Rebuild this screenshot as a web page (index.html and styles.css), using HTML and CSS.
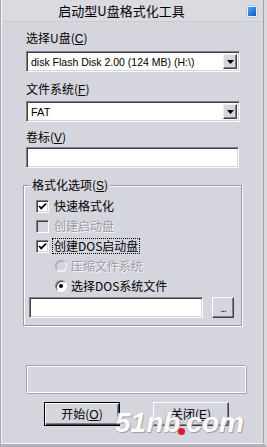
FILE: index.html
```html
<!DOCTYPE html>
<html lang="zh-CN">
<head>
<meta charset="utf-8">
<title>启动型U盘格式化工具</title>
<link rel="stylesheet" href="styles.css">
</head>
<body>
<div class="win">
  <div class="panel">
    <div class="titlebar">
      <span class="title-text">启动型U盘格式化工具</span>
      <span class="title-icon"></span>
    </div>
    <div class="content">
      <div class="label lbl-drive">选择U盘(<u>C</u>)</div>
      <div class="field combo combo-drive">
        <span class="combo-text">disk Flash Disk 2.00 (124 MB) (H:\)</span>
        <span class="drop"><svg width="7" height="4" viewBox="0 0 7 4"><path d="M0 0h7L3.5 4z" fill="#000"/></svg></span>
      </div>
      <div class="label lbl-fs">文件系统(<u>F</u>)</div>
      <div class="field combo combo-fs">
        <span class="combo-text">FAT</span>
        <span class="drop"><svg width="7" height="4" viewBox="0 0 7 4"><path d="M0 0h7L3.5 4z" fill="#000"/></svg></span>
      </div>
      <div class="label lbl-vol">卷标(<u>V</u>)</div>
      <div class="field tb-vol"></div>
      <fieldset class="group">
        <legend>格式化选项(<u>S</u>)</legend>
        <div class="row">
          <span class="chk"><svg width="9" height="9" viewBox="0 0 9 9"><path d="M1 4l2.3 2.4L8 1.5" fill="none" stroke="#000" stroke-width="1.8"/></svg></span>
          <span class="opt">快速格式化</span>
        </div>
        <div class="row disabled">
          <span class="chk off"></span>
          <span class="opt">创建启动盘</span>
        </div>
        <div class="row">
          <span class="chk"><svg width="9" height="9" viewBox="0 0 9 9"><path d="M1 4l2.3 2.4L8 1.5" fill="none" stroke="#000" stroke-width="1.8"/></svg></span>
          <span class="opt focus">创建DOS启动盘</span>
        </div>
        <div class="row sub disabled">
          <span class="radio off"></span>
          <span class="opt">压缩文件系统</span>
        </div>
        <div class="row sub">
          <span class="radio on"><span class="radio-dot"></span></span>
          <span class="opt">选择DOS系统文件</span>
        </div>
        <div class="file-row">
          <div class="field tb-file"></div>
          <div class="btn btn-browse">...</div>
        </div>
      </fieldset>
      <div class="progress"></div>
      <div class="buttons">
        <div class="btn btn-main btn-default"><span>开始(<u>O</u>)</span></div>
        <div class="btn btn-main"><span>关闭(<u>E</u>)</span></div>
      </div>
    </div>
  </div>
  <div class="watermark">51nb<span class="wm-dot"></span>com</div>
</div>
</body>
</html>
```
FILE: styles.css
```css
html, body {
  margin: 0;
  padding: 0;
}
body {
  width: 267px;
  height: 447px;
  overflow: hidden;
  background: #d5d5dd;
  font-family: "Liberation Sans", "Noto Sans CJK SC", sans-serif;
  font-size: 12px;
  color: #000;
}
.win {
  position: relative;
  width: 267px;
  height: 447px;
  box-sizing: border-box;
  border-left: 1px solid #a8a8b0;
  border-right: 3px solid #d8d8de;
  border-bottom: 3px solid #b0b0b8;
  background: #d5d5dd;
}
.panel {
  height: 100%;
  box-sizing: border-box;
  border-left: 1px solid #f4f4f8;
  border-right: 1px solid #a0a0a8;
  border-bottom: 1px solid #f4f4f8;
}
.titlebar {
  height: 21px;
  display: flex;
  align-items: center;
  border-bottom: 1px solid #cbcbd2;
  background: #dadae0;
}
.title-text {
  flex: 1;
  text-align: center;
  font-size: 13px;
  line-height: 15px;
  font-family: "Noto Sans CJK SC", sans-serif;
}
.title-icon {
  width: 8px;
  height: 9px;
  margin: 2px 6px 0 6px;
  border: 1px solid #eef2f8;
  border-radius: 1px;
  background: linear-gradient(135deg, #5aa8f0 0%, #2a7ad8 55%, #1a5cb8 100%);
  box-shadow: 0 0 0 1px #b8c4d4;
}
.content {
  padding-left: 24px;
}
.label {
  height: 14px;
  line-height: 14px;
  font-family: "Noto Sans CJK SC", sans-serif;
  font-size: 12px;
}
.label u, legend u, .btn u {
  font-family: "Liberation Sans", sans-serif;
}
.field {
  box-sizing: border-box;
  background: #fff;
  border: 1px solid;
  border-color: #80808a #fcfcfe #fcfcfe #80808a;
  box-shadow: inset 1px 1px 0 #404048, inset -1px -1px 0 #d5d5dd;
}
.lbl-drive { margin-top: 9px; }
.combo {
  width: 214px;
  height: 21px;
  display: flex;
  align-items: center;
  padding: 2px;
}
.combo-drive { margin-top: 6px; }
.combo-text {
  flex: 1;
  padding-left: 2px;
  font-size: 10.5px;
  font-family: "Liberation Sans", sans-serif;
  white-space: nowrap;
  overflow: hidden;
}
.combo-fs .combo-text {
  font-size: 11px;
}
.drop {
  width: 14px;
  height: 15px;
  box-sizing: border-box;
  background: #d5d5dd;
  border: 1px solid;
  border-color: #f0f0f4 #404048 #404048 #f0f0f4;
  box-shadow: inset -1px -1px 0 #80808a;
  display: flex;
  align-items: center;
  justify-content: center;
}
.lbl-fs { margin-top: 10px; }
.combo-fs { margin-top: 5px; }
.lbl-vol { margin-top: 8px; }
.tb-vol {
  margin-top: 3px;
  width: 213px;
  height: 21px;
}
.group {
  margin: 10px 0 0 -3px;
  width: 219px;
  box-sizing: border-box;
  padding: 4px 0 7px 5px;
  border: 1px solid #9a9aa2;
  box-shadow: 1px 1px 0 #fff, inset 1px 1px 0 #fff;
  min-width: 0;
}
.group legend {
  padding: 0 2px;
  margin-left: 1px;
  height: 14px;
  line-height: 14px;
  background: #d5d5dd;
  font-family: "Noto Sans CJK SC", sans-serif;
  font-size: 12px;
}
.row {
  height: 20px;
  display: flex;
  align-items: center;
  padding-left: 7px;
  font-family: "Noto Sans CJK SC", sans-serif;
}
.row.sub {
  padding-left: 26px;
}
.chk {
  width: 13px;
  height: 13px;
  box-sizing: border-box;
  background: #fff;
  border: 1px solid;
  border-color: #80808a #fcfcfe #fcfcfe #80808a;
  box-shadow: inset 1px 1px 0 #404048, inset -1px -1px 0 #d5d5dd;
  display: flex;
  align-items: center;
  justify-content: center;
  margin-right: 5px;
}
.chk.off {
  background: #d5d5dd;
}
.opt {
  line-height: 14px;
  height: 14px;
  font-size: 12px;
  white-space: nowrap;
}
.opt.focus {
  outline: 1px dotted #000;
  outline-offset: 0;
  padding: 0 1px;
  margin-left: -1px;
}
.row.disabled .opt {
  color: #9c9ca6;
  text-shadow: 1px 1px 0 #fafafc;
}
.radio {
  width: 12px;
  height: 12px;
  box-sizing: border-box;
  border-radius: 50%;
  border: 1px solid;
  border-color: #80808a #fcfcfe #fcfcfe #80808a;
  box-shadow: inset 1px 1px 0 #404048;
  background: #fff;
  margin-right: 4px;
  display: flex;
  align-items: center;
  justify-content: center;
}
.radio.off {
  background: #d5d5dd;
  border-color: #a8a8b0 #fcfcfe #fcfcfe #a8a8b0;
  box-shadow: inset 1px 1px 0 #b8b8c0;
}
.radio-dot {
  width: 4px;
  height: 4px;
  border-radius: 50%;
  background: #000;
}
.file-row {
  margin-top: 1px;
  display: flex;
  gap: 9px;
}
.tb-file {
  width: 174px;
  height: 21px;
}
.btn {
  box-sizing: border-box;
  background: #d5d5dd;
  border: 1px solid;
  border-color: #fcfcfe #404048 #404048 #fcfcfe;
  box-shadow: inset -1px -1px 0 #80808a;
  display: flex;
  align-items: center;
  justify-content: center;
  font-family: "Noto Sans CJK SC", sans-serif;
  font-size: 12px;
}
.btn-browse {
  width: 22px;
  height: 21px;
  font-family: "Liberation Sans", sans-serif;
  font-size: 10px;
  letter-spacing: -1px;
  padding-top: 2px;
}
.progress {
  margin-top: 39px;
  width: 220px;
  height: 28px;
  box-sizing: border-box;
  border: 1px solid;
  border-color: #a4a4ac #fcfcfe #fcfcfe #a4a4ac;
  box-shadow: inset 1px 1px 0 #fcfcfe, 1px 1px 0 #a4a4ac;
}
.buttons {
  margin-top: 9px;
  display: flex;
  gap: 33px;
  padding-left: 18px;
}
.btn-main {
  width: 76px;
  height: 24px;
  line-height: 14px;
}
.btn-default {
  border: 1px solid #000;
  box-shadow: inset 1px 1px 0 #fcfcfe, inset -1px -1px 0 #404048, inset -2px -2px 0 #80808a;
}
.watermark {
  position: absolute;
  left: 114px;
  top: 408px;
  font-family: "Liberation Sans", sans-serif;
  font-weight: bold;
  font-style: italic;
  font-size: 28px;
  line-height: 30px;
  letter-spacing: 0;
  color: #fff;
  text-shadow: 1px 1px 1px #9a9aa4, -1px 0 0 #c0c0c8;
  opacity: 0.95;
  pointer-events: none;
}
.wm-dot {
  display: inline-block;
  width: 7px;
  height: 7px;
  border-radius: 50%;
  background: #e0101c;
  margin: 0 1px 0 -2px;
  vertical-align: -3px;
}
```
